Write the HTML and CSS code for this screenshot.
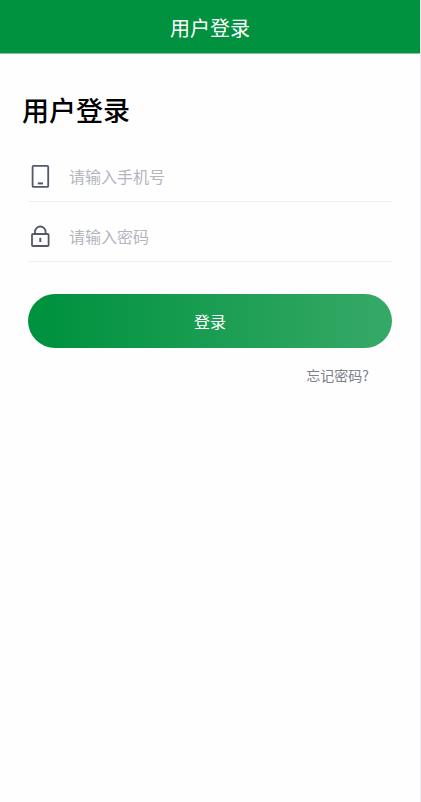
FILE: index.html
```html
<!DOCTYPE html>
<html lang="zh-CN">
<head>
<meta charset="utf-8">
<meta name="viewport" content="width=device-width, initial-scale=1">
<title>用户登录</title>
<link rel="stylesheet" href="styles.css">
</head>
<body>
<div class="page">
  <header class="topbar">用户登录</header>
  <main class="content">
    <h1 class="title">用户登录</h1>
    <form class="form">
      <div class="field">
        <label class="field-icon" for="phone" aria-label="手机号">
          <svg width="24" height="24" viewBox="0 0 24 24" fill="none" stroke="#545869" stroke-width="1.8">
            <rect x="4.6" y="1.9" width="15.6" height="21" rx="1"/>
            <path d="M9.8 19.4h5.2" stroke-width="2"/>
          </svg>
        </label>
        <input class="field-input" id="phone" type="tel" placeholder="请输入手机号">
      </div>
      <div class="field">
        <label class="field-icon" for="password" aria-label="密码">
          <svg width="24" height="24" viewBox="0 0 24 24" fill="none" stroke="#545869" stroke-width="1.8">
            <rect x="4" y="10" width="16.6" height="12" rx="1"/>
            <path d="M7 10V7.8a5.3 5.3 0 0 1 10.6 0V10"/>
            <path d="M12.3 13.8v4.2" stroke-width="2"/>
          </svg>
        </label>
        <input class="field-input" id="password" type="password" placeholder="请输入密码">
      </div>
      <button class="submit" type="button">登录</button>
      <a class="forgot" href="#">忘记密码?</a>
    </form>
  </main>
</div>
</body>
</html>
```
FILE: styles.css
```css
* {
  box-sizing: border-box;
}

body {
  margin: 0;
  background: #fefefe;
  font-family: "Noto Sans CJK SC", sans-serif;
}

.page {
  min-height: 100vh;
  border-right: 1px solid #ebebed;
}

.topbar {
  height: 54px;
  border-bottom: 1px solid #7fc99b;
  background: #00923f;
  color: #fff;
  font-size: 20px;
  line-height: 56px;
  text-align: center;
}

.content {
  padding: 36px 28px 0;
}

.title {
  margin: 0 0 12px -6px;
  color: #000;
  font-size: 27px;
  font-weight: 500;
  line-height: 40px;
}

.form {
  display: flex;
  flex-direction: column;
}

.field {
  display: flex;
  align-items: center;
  height: 60px;
  padding-top: 8px;
  border-bottom: 1px solid #e9f1f5;
}

.field-icon {
  display: flex;
  margin-right: 17px;
}

.field-input {
  flex: 1;
  min-width: 0;
  height: 40px;
  padding: 0;
  border: 0;
  outline: 0;
  background: transparent;
  color: #333;
  font-family: inherit;
  font-size: 16px;
}

.field-input::placeholder {
  color: #b3b6bf;
}

.submit {
  height: 54px;
  margin-top: 32px;
  padding: 0;
  border: 0;
  border-radius: 27px;
  background: linear-gradient(90deg, #00923f 5%, #34a865 95%);
  color: #fff;
  font-family: inherit;
  font-size: 16px;
}

.forgot {
  align-self: flex-end;
  margin: 16px 23px 0 0;
  color: #7d808c;
  font-size: 14px;
  line-height: 22px;
  text-decoration: none;
}
```
